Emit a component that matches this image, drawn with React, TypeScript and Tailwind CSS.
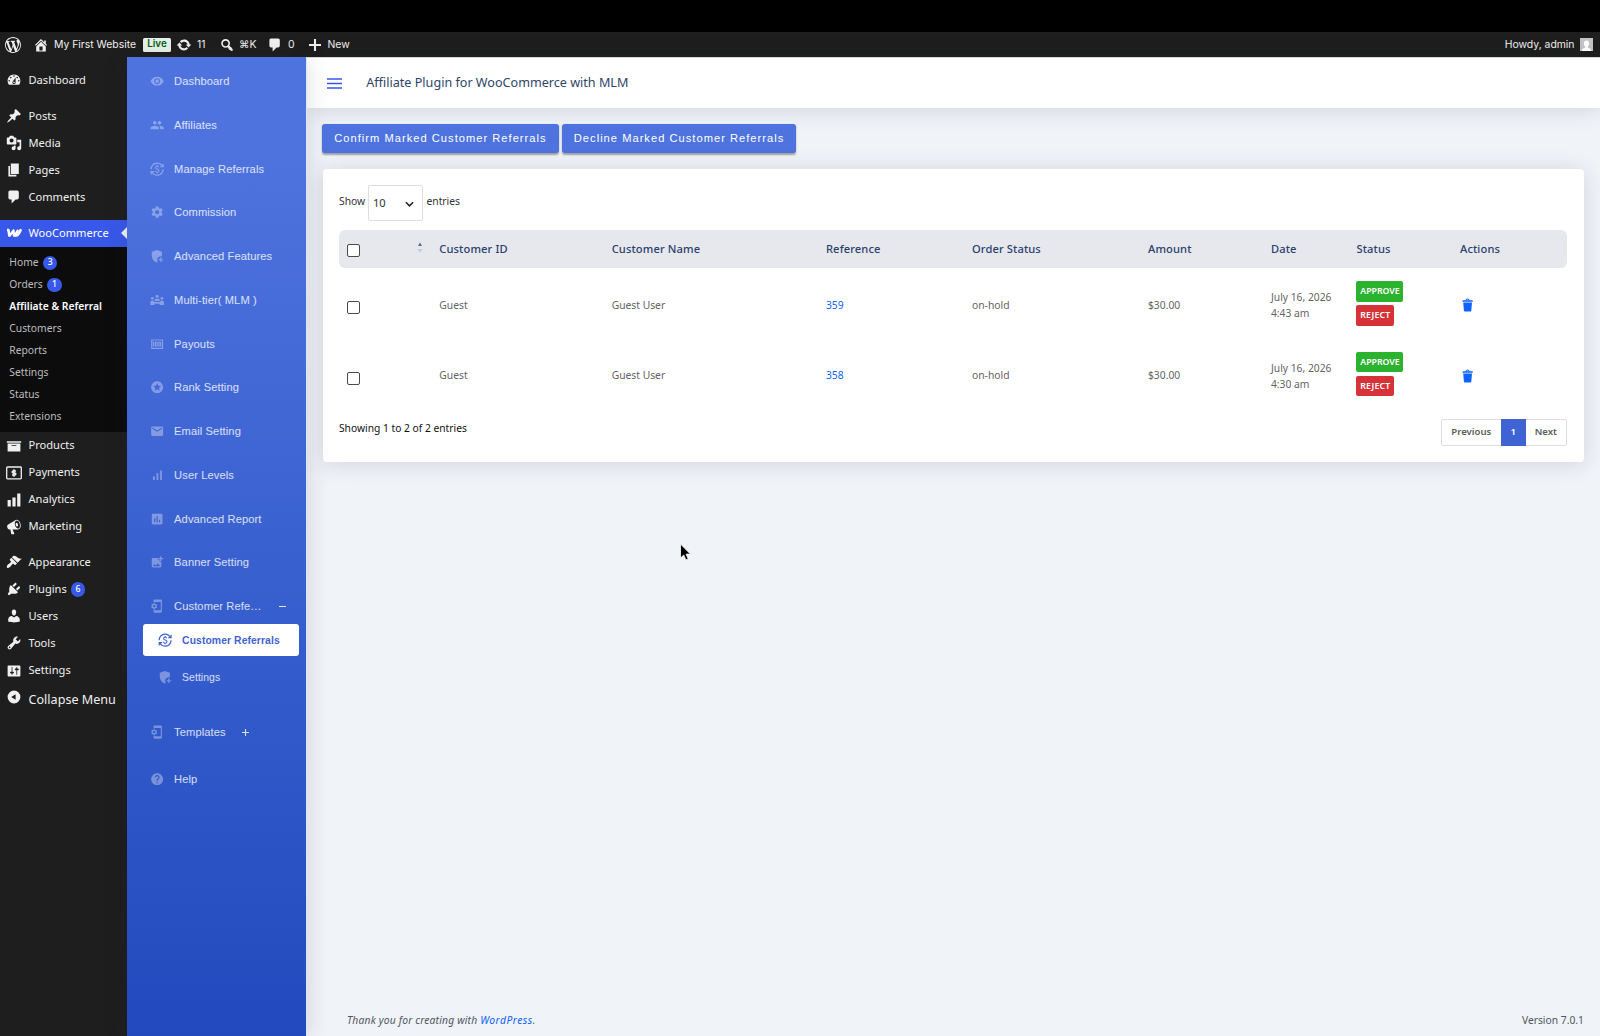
import type { ReactNode } from "react";
import type { IconType } from "react-icons";
import {
  MdAddPhotoAlternate,
  MdAssessment,
  MdCurrencyExchange,
  MdHelp,
  MdMail,
  MdMoney,
  MdPeople,
  MdPhonelinkSetup,
  MdSettings,
  MdSignalCellularAlt,
  MdStars,
  MdVisibility,
} from "react-icons/md";

const dashicons = {
  wordpress:
    "M20 10c0-5.51-4.49-10-10-10C4.48 0 0 4.49 0 10c0 5.52 4.48 10 10 10 5.51 0 10-4.48 10-10zM7.78 15.37L4.37 6.22c.55-.02 1.17-.08 1.17-.08.5-.06.44-1.13-.06-1.11 0 0-1.45.11-2.37.11-.18 0-.37 0-.58-.01C4.12 2.69 6.87 1.11 10 1.11c2.33 0 4.45.87 6.05 2.34-.68-.11-1.65.39-1.65 1.58 0 .74.45 1.36.9 2.1.35.61.55 1.36.55 2.46 0 1.49-1.4 5-1.4 5l-3.03-8.37c.54-.02.82-.17.82-.17.5-.05.44-1.25-.06-1.22 0 0-1.44.12-2.38.12-.87 0-2.33-.12-2.33-.12-.5-.03-.56 1.2-.06 1.22l.92.08 1.26 3.41zM17.41 10c.24-.64.74-1.87.43-4.25.7 1.29 1.05 2.71 1.05 4.25 0 3.29-1.73 6.24-4.4 7.78.97-2.59 1.94-5.2 2.92-7.78zM6.1 18.09C3.12 16.65 1.11 13.53 1.11 10c0-1.3.23-2.48.72-3.59C3.25 10.3 4.67 14.2 6.1 18.09zm4.03-6.63l2.58 6.98c-.86.29-1.76.45-2.71.45-.79 0-1.57-.11-2.29-.33.81-2.38 1.62-4.74 2.42-7.1z",
  home: "M16 8.5l1.53 1.53-1.06 1.06L10 4.6l-6.47 6.49-1.06-1.06L10 2.5l4 4v-2h2v4zm-6-2.46l6 5.99V18H4v-5.97zM12 17v-5H8v5h4z",
  update:
    "M10.2 3.28c3.53 0 6.43 2.61 6.92 6h2.08l-3.5 4-3.5-4h2.32c-.45-1.97-2.21-3.45-4.32-3.45-1.45 0-2.73.71-3.54 1.78L4.95 5.66C6.23 4.2 8.11 3.28 10.2 3.28zm-.4 13.44c-3.52 0-6.43-2.61-6.92-6H.8l3.5-4c1.17 1.33 2.33 2.67 3.5 4H5.48c.45 1.97 2.21 3.45 4.32 3.45 1.45 0 2.73-.71 3.54-1.78l1.71 1.95c-1.28 1.46-3.15 2.38-5.25 2.38z",
  search:
    "M12.14 4.18c1.87 1.87 2.11 4.75.72 6.89.12.1.22.21.36.31.2.16.47.36.81.59.34.24.56.39.66.47.42.31.73.57.94.78.32.32.6.65.84 1 .25.35.44.69.59 1.04.14.35.21.68.18 1-.02.32-.14.59-.36.81s-.49.34-.81.36c-.31.02-.65-.04-.99-.19-.35-.14-.7-.34-1.04-.59-.35-.24-.68-.52-1-.84-.21-.21-.47-.52-.77-.93-.1-.13-.25-.35-.47-.66-.22-.32-.4-.57-.56-.78-.16-.2-.29-.35-.44-.5-2.07 1.09-4.69.76-6.44-.98-2.14-2.15-2.14-5.64 0-7.78 2.15-2.15 5.63-2.15 7.78 0zm-1.41 6.36c1.36-1.37 1.36-3.58 0-4.95-1.37-1.37-3.59-1.37-4.95 0-1.37 1.37-1.37 3.58 0 4.95 1.36 1.37 3.58 1.37 4.95 0z",
  plus: "M8.7 2.5h2.6v6.2h6.2v2.6h-6.2v6.2H8.7v-6.2H2.5V8.7h6.2z",
  dashboard:
    "M3.76 16h12.48c1.1-1.37 1.76-3.11 1.76-5 0-4.42-3.58-8-8-8s-8 3.58-8 8c0 1.89.66 3.63 1.76 5zM10 4c.55 0 1 .45 1 1s-.45 1-1 1-1-.45-1-1 .45-1 1-1zM6 6c.55 0 1 .45 1 1s-.45 1-1 1-1-.45-1-1 .45-1 1-1zm8 0c.55 0 1 .45 1 1s-.45 1-1 1-1-.45-1-1 .45-1 1-1zm-5.37 5.55L12 7v6c0 1.1-.9 2-2 2s-2-.9-2-2c0-.57.24-1.08.63-1.45zM4 10c.55 0 1 .45 1 1s-.45 1-1 1-1-.45-1-1 .45-1 1-1zm12 0c.55 0 1 .45 1 1s-.45 1-1 1-1-.45-1-1 .45-1 1-1zm-5 3c0-.55-.45-1-1-1s-1 .45-1 1 .45 1 1 1 1-.45 1-1z",
  post: "M10.44 3.02l1.82-1.82 6.36 6.35-1.83 1.82c-1.05-.68-2.48-.57-3.41.36l-.75.75c-.92.93-1.04 2.35-.35 3.41l-1.83 1.82-2.41-2.41-2.8 2.79c-.42.42-3.38 2.71-3.8 2.29s1.86-3.39 2.28-3.81l2.79-2.79L4.1 9.36l1.83-1.82c1.05.69 2.48.57 3.4-.36l.75-.75c.93-.92 1.05-2.35.36-3.41z",
  media:
    "M13 11V4c0-.55-.45-1-1-1h-1.67L9 1H5L3.67 3H2c-.55 0-1 .45-1 1v7c0 .55.45 1 1 1h10c.55 0 1-.45 1-1zM7 4.5c1.38 0 2.5 1.12 2.5 2.5S8.38 9.5 7 9.5 4.5 8.38 4.5 7 5.62 4.5 7 4.5zM14 6h5v10.5c0 1.38-1.12 2.5-2.5 2.5S14 17.88 14 16.5s1.12-2.5 2.5-2.5c.17 0 .34.02.5.05V9h-3V6zm-4 8.05V13h2v3.5c0 1.38-1.12 2.5-2.5 2.5S7 17.88 7 16.5 8.12 14 9.5 14c.17 0 .34.02.5.05z",
  page: "M6 15V2h10v13H6zm-1 1h8v2H3V5h2v11z",
  comments:
    "M5 2h9c1.1 0 2 .9 2 2v7c0 1.1-.9 2-2 2h-2l-5 5v-5H5c-1.1 0-2-.9-2-2V4c0-1.1.9-2 2-2z",
  archive: "M19 4v2H1V4h18zM2 7h16v10H2V7zm11 3V9H7v1h6z",
  chart: "M18 18V2h-4v16h4zm-6 0V7H8v11h4zm-6 0v-8H2v8h4z",
  megaphone:
    "M18.15 5.94c.46 1.62.38 3.22-.02 4.48-.42 1.28-1.26 2.18-2.3 2.48-.16.06-.26.06-.4.06-.06.02-.12.02-.18.02-.06.02-.14.02-.22.02h-6.8l2.22 5.5c.02.14-.06.26-.14.34-.08.1-.24.16-.34.16H6.95c-.1 0-.26-.06-.34-.16-.08-.08-.16-.2-.14-.34l-1-5.5H4.25l-.02-.02c-.5.06-1.08-.18-1.54-.62s-.88-1.08-1.06-1.88c-.24-.8-.2-1.56-.02-2.2.18-.62.58-1.08 1.06-1.3l.02-.02 9-5.4c.1-.06.18-.1.24-.16.06-.04.14-.08.24-.12.16-.08.28-.12.5-.18 1.04-.3 2.24.1 3.22.98s1.84 2.24 2.26 3.86zm-2.58 5.98h-.02c.4-.1.74-.34 1.04-.7.58-.7.86-1.76.86-3.04 0-.64-.1-1.3-.28-1.98-.34-1.36-1.02-2.5-1.78-3.24s-1.68-1.1-2.46-.88c-.82.22-1.4.96-1.7 2-.32 1.04-.28 2.36.06 3.72.38 1.36 1 2.5 1.8 3.24.78.74 1.62 1.1 2.48.88zm-2.54-7.08c.22-.04.42-.02.62.04.38.16.76.48 1.02 1s.42 1.2.42 1.78c0 .3-.04.56-.12.8-.18.48-.44.84-.86.94-.34.1-.8-.06-1.14-.4s-.64-.86-.78-1.5c-.18-.62-.12-1.24.02-1.72s.48-.84.82-.94z",
  appearance:
    "M14.48 11.06L7.41 3.99l1.5-1.5c.5-.56 2.3-.47 3.51.32 1.21.8 1.43 1.28 2.91 2.1 1.18.64 2.45 1.26 4.45.85zm-.71.71L6.7 4.7 4.93 6.47c-.39.39-.39 1.02 0 1.41l1.06 1.06c.39.39.39 1.03 0 1.42-.6.6-1.43 1.11-2.21 1.69-.35.26-.7.53-1.01.84C1.43 14.23.4 16.08 1.4 17.07c.99 1 2.84-.03 4.18-1.36.31-.31.58-.66.85-1.02.57-.78 1.08-1.61 1.69-2.21.39-.39 1.02-.39 1.41 0l1.06 1.06c.39.39 1.02.39 1.41 0z",
  plugins:
    "M13.11 4.36L9.87 7.6 8 5.73l3.24-3.24c.35-.34 1.05-.2 1.56.32.52.51.66 1.21.31 1.55zm-8 1.77l.91-1.12 9.01 9.01-1.19.84c-.71.71-2.63 1.16-3.82 1.16H6.14L4.9 17.26c-.59.59-1.54.59-2.12 0-.59-.58-.59-1.53 0-2.12l1.24-1.24v-3.88c0-1.13.4-3.19 1.09-3.89zm7.26 3.97l3.24-3.24c.34-.35 1.04-.21 1.55.31.52.51.66 1.21.31 1.55l-3.24 3.25z",
  users:
    "M10 9.25c-2.27 0-2.73-3.44-2.73-3.44C7 4.02 7.82 2 9.97 2c2.16 0 2.98 2.02 2.71 3.81 0 0-.41 3.44-2.68 3.44zm0 2.57L12.72 10c2.39 0 4.52 2.33 4.52 4.53v2.49s-3.65 1.13-7.24 1.13c-3.65 0-7.24-1.13-7.24-1.13v-2.49c0-2.25 1.94-4.48 4.47-4.48z",
  tools:
    "M16.68 9.77c-1.34 1.34-3.3 1.67-4.95.99l-5.41 6.52c-.99.99-2.59.99-3.58 0s-.99-2.59 0-3.57l6.52-5.42c-.68-1.65-.35-3.61.99-4.95 1.28-1.28 3.12-1.62 4.72-1.06l-2.89 2.89 2.82 2.82 2.86-2.87c.53 1.58.18 3.39-1.08 4.65zM3.81 16.21c.4.39 1.04.39 1.43 0 .4-.4.4-1.04 0-1.43-.39-.4-1.03-.4-1.43 0-.39.39-.39 1.03 0 1.43z",
  settings:
    "M18 16V4c0-.55-.45-1-1-1H3c-.55 0-1 .45-1 1v12c0 .55.45 1 1 1h14c.55 0 1-.45 1-1zM8 11h1c.55 0 1 .45 1 1s-.45 1-1 1H8v1.5c0 .28-.22.5-.5.5s-.5-.22-.5-.5V13H6c-.55 0-1-.45-1-1s.45-1 1-1h1V5.5c0-.28.22-.5.5-.5s.5.22.5.5V11zm5-2h-1c-.55 0-1-.45-1-1s.45-1 1-1h1V5.5c0-.28.22-.5.5-.5s.5.22.5.5V7h1c.55 0 1 .45 1 1s-.45 1-1 1h-1v5.5c0 .28-.22.5-.5.5s-.5-.22-.5-.5V9z",
  collapse: "M10 2a8 8 0 1 0 0 16 8 8 0 0 0 0-16zm2 4.5v7L6.5 10z",
  trash:
    "M12 4h3c.6 0 1 .4 1 1v1H3V5c0-.6.5-1 1-1h3c.2-1.1 1.3-2 2.5-2s2.3.9 2.5 2zM8 4h3c-.2-.6-.9-1-1.5-1S8.2 3.4 8 4zM4 7h11l-.9 10.1c0 .5-.5.9-1 .9H5.9c-.5 0-.9-.4-1-.9L4 7z",
};

type DashiconName = keyof typeof dashicons;

function Dashicon({ name, className = "size-4" }: { name: DashiconName; className?: string }) {
  return (
    <svg viewBox="0 0 20 20" fill="currentColor" fillRule="evenodd" className={`shrink-0 ${className}`}>
      <path d={dashicons[name]} />
    </svg>
  );
}

function WooIcon() {
  return (
    <svg viewBox="0 0 16 16" fill="none" stroke="currentColor" strokeLinejoin="round" className="size-4 shrink-0">
      <path strokeWidth="2.4" d="M1 5h1.500l.7 5.600h.6l3.700-5.200.5 5.200h.7l3.500-5.600" />
      <path strokeWidth="2.600" strokeLinecap="round" d="M9.400 10.400c2.200.4 3.900-1.900 5.100-5.200" />
    </svg>
  );
}

function PaymentsIcon() {
  return (
    <svg viewBox="0 0 16 16" fill="none" stroke="currentColor" className="size-4 shrink-0">
      <rect x="0.7" y="2" width="14.6" height="11.8" rx="0.8" strokeWidth="1.3" />
      <path strokeWidth="1.5" d="M10 6H7.2a1 1 0 0 0 0 2h1.600a1 1 0 0 1 0 2H6M8 4.200v7.600" />
    </svg>
  );
}

function ShieldPlusIcon({ className }: { className?: string }) {
  return (
    <svg viewBox="0 0 24 24" fill="currentColor" className={className}>
      <path d="M11.500 1.500 3 4.700v6.500c0 5.300 3.600 9.700 8.500 11.300.6-.2 1.100-.4 1.600-.6a6.200 6.200 0 0 1 6.700-9.600c.1-.4.2-.7.2-1.100V4.700z" />
      <path d="M17.200 14h2v3h3v2h-3v3h-2v-3h-3v-2h3z" />
    </svg>
  );
}

function NetworkIcon({ className }: { className?: string }) {
  return (
    <svg viewBox="0 0 24 24" fill="currentColor" className={className}>
      <circle cx="12" cy="5.500" r="2.600" />
      <circle cx="4" cy="9" r="2.400" />
      <circle cx="20" cy="9" r="2.400" />
      <path d="M7.500 13c0-2.400 2-3.700 4.500-3.700s4.500 1.300 4.500 3.700v.6h-9z" />
      <path d="M.5 20v-4.500c0-1.700 1.500-2.900 3.500-2.900s2.800 1 3.500 2.600h9c.7-1.600 1.500-2.600 3.500-2.600s3.500 1.200 3.500 2.900V20h-7.200v-2h-8.600v2z" />
    </svg>
  );
}

function CountBadge({ children }: { children: ReactNode }) {
  return (
    <span className="flex size-[14.4px] items-center justify-center rounded-full bg-[#3858e9] text-[8.7px] leading-none font-medium text-white">
      {children}
    </span>
  );
}

interface AdminItem {
  label: string;
  icon: DashiconName | "payments";
  count?: number;
}

const adminTop: AdminItem[] = [
  { label: "Posts", icon: "post" },
  { label: "Media", icon: "media" },
  { label: "Pages", icon: "page" },
  { label: "Comments", icon: "comments" },
];

const wooSubmenu = [
  { label: "Home", count: 3 },
  { label: "Orders", count: 1 },
  { label: "Affiliate & Referral", current: true },
  { label: "Customers" },
  { label: "Reports" },
  { label: "Settings" },
  { label: "Status" },
  { label: "Extensions" },
];

const adminCommerce: AdminItem[] = [
  { label: "Products", icon: "archive" },
  { label: "Payments", icon: "payments" },
  { label: "Analytics", icon: "chart" },
  { label: "Marketing", icon: "megaphone" },
];

const adminSite: AdminItem[] = [
  { label: "Appearance", icon: "appearance" },
  { label: "Plugins", icon: "plugins", count: 6 },
  { label: "Users", icon: "users" },
  { label: "Tools", icon: "tools" },
  { label: "Settings", icon: "settings" },
];

type MenuIcon = IconType | typeof ShieldPlusIcon;

const pluginMenu: { label: string; icon: MenuIcon }[] = [
  { label: "Dashboard", icon: MdVisibility },
  { label: "Affiliates", icon: MdPeople },
  { label: "Manage Referrals", icon: MdCurrencyExchange },
  { label: "Commission", icon: MdSettings },
  { label: "Advanced Features", icon: ShieldPlusIcon },
  { label: "Multi-tier( MLM )", icon: NetworkIcon },
  { label: "Payouts", icon: MdMoney },
  { label: "Rank Setting", icon: MdStars },
  { label: "Email Setting", icon: MdMail },
  { label: "User Levels", icon: MdSignalCellularAlt },
  { label: "Advanced Report", icon: MdAssessment },
  { label: "Banner Setting", icon: MdAddPhotoAlternate },
];

const referrals = [
  { reference: "359", time: "4:43 am" },
  { reference: "358", time: "4:30 am" },
];

function AdminBar() {
  return (
    <header className="flex h-[25px] shrink-0 items-center bg-[#1e1e1e] pt-[0.5px] font-['Inter',sans-serif] text-[10.4px] text-[#f0f0f0]">
      <div className="w-[33px] pl-[5px]">
        <Dashicon name="wordpress" />
      </div>
      <div className="flex w-[110px] items-center gap-[5px] whitespace-nowrap">
        <Dashicon name="home" />
        <span className="pt-px">My First Website</span>
      </div>
      <span className="flex h-[14px] w-[28px] items-center justify-center rounded-[1.5px] bg-[#e6f2e8] text-[9.8px] font-semibold text-[#005c12]">
        Live
      </span>
      <div className="ml-[5px] flex w-[43px] items-center gap-[5px]">
        <Dashicon name="update" />
        <span className="pt-px">11</span>
      </div>
      <div className="flex w-[48px] items-center gap-[4px]">
        <Dashicon name="search" />
        <span className="pt-px">⌘K</span>
      </div>
      <div className="flex w-[40px] items-center gap-[5px]">
        <Dashicon name="comments" />
        <span className="pt-px">0</span>
      </div>
      <div className="flex items-center gap-[4.5px]">
        <Dashicon name="plus" />
        <span className="pt-px">New</span>
      </div>
      <div className="ml-auto flex items-center gap-[5.5px] pr-[7px]">
        <span className="pt-px">Howdy, admin</span>
        <svg viewBox="0 0 13 13" className="size-[13px]">
          <path fill="#c3c3c3" d="M0 0h13v13H0z" />
          <path
            fill="#fff"
            d="M6.5 2.6c1.7 0 2.7 1.3 2.7 3 0 1.2-.5 2.2-1.3 2.8v1l3 1.5V13H2.1v-2.1l3-1.5v-1C4.3 7.8 3.8 6.8 3.8 5.6c0-1.7 1-3 2.7-3z"
          />
        </svg>
      </div>
    </header>
  );
}

function AdminRow({ item }: { item: AdminItem }) {
  return (
    <li className="flex h-[27.05px] items-center gap-[6.5px] pl-[6px]">
      {item.icon === "payments" ? <PaymentsIcon /> : <Dashicon name={item.icon} />}
      <span className="flex items-center gap-[4px]">
        {item.label}
        {item.count && <CountBadge>{item.count}</CountBadge>}
      </span>
    </li>
  );
}

function AdminMenu() {
  return (
    <nav className="w-[127.3px] shrink-0 bg-[#1e1e1e] pt-[9.5px] text-[11.1px] text-[#f0f0f0]">
      <ul>
        <AdminRow item={{ label: "Dashboard", icon: "dashboard" }} />
      </ul>
      <ul className="mt-[9px]">
        {adminTop.map((item) => (
          <AdminRow key={item.label} item={item} />
        ))}
      </ul>
      <div className="relative mt-[9px] flex h-[27px] items-center gap-[6.5px] bg-[#3858e9] pl-[6px] text-white">
        <WooIcon />
        WooCommerce
        <span className="absolute top-1/2 right-0 -translate-y-1/2 border-y-[6px] border-r-[6px] border-y-transparent border-r-[#f0f3f8]" />
      </div>
      <ul className="bg-[#0c0c0c] pt-[5px] pb-[4px] text-[10.3px] text-[#bcbcbc]">
        {wooSubmenu.map((item) => (
          <li
            key={item.label}
            className={`flex h-[22.05px] items-center gap-[4.5px] pl-[9.3px] ${item.current ? "font-semibold text-white" : ""}`}
          >
            {item.label}
            {item.count && <CountBadge>{item.count}</CountBadge>}
          </li>
        ))}
      </ul>
      <ul>
        {adminCommerce.map((item) => (
          <AdminRow key={item.label} item={item} />
        ))}
      </ul>
      <ul className="mt-[8.5px]">
        {adminSite.map((item) => (
          <AdminRow key={item.label} item={item} />
        ))}
      </ul>
      <div className="flex h-8 items-start gap-[6.5px] pt-[5px] pl-[6px] text-[12.6px]">
        <Dashicon name="collapse" />
        <span className="pt-[2px]">Collapse Menu</span>
      </div>
    </nav>
  );
}

function PluginItem({ label, icon: Icon, toggle }: { label: string; icon: MenuIcon; toggle?: ReactNode }) {
  return (
    <li className="flex h-[43.75px] items-center pl-[22.5px]">
      <Icon className="size-[14.3px] shrink-0 text-white/35" />
      <span className="ml-[10px]">{label}</span>
      {toggle}
    </li>
  );
}

function PluginSidebar() {
  return (
    <nav className="z-10 w-[179.7px] shrink-0 border-r border-[#dfe5f5] bg-linear-to-b from-[#4e73df] from-10% to-[#224abe] pt-[2.5px] font-['Liberation_Sans',Arial,sans-serif] text-[11.13px] tracking-[0.1px] text-white/80 shadow-[0_2px_22px_rgba(33,40,50,0.15)]">
      <ul>
        {pluginMenu.map((item) => (
          <PluginItem key={item.label} {...item} />
        ))}
        <PluginItem
          label="Customer Refe…"
          icon={MdPhonelinkSetup}
          toggle={<span className="ml-[18px] h-px w-[7px] bg-white/85" />}
        />
      </ul>
      <div className="-mt-[4px] ml-[16px] flex h-[32px] w-[155.5px] items-center rounded-[3px] bg-white pl-[14.5px] text-[10.33px] font-bold text-[#3f63d2]">
        <MdCurrencyExchange className="size-[14.3px]" />
        <span className="ml-[10px]">Customer Referrals</span>
      </div>
      <div className="mt-[5px] flex h-[32px] items-center pl-[30.5px] text-[10.33px]">
        <ShieldPlusIcon className="size-[14.3px] text-white/35" />
        <span className="ml-[10px]">Settings</span>
      </div>
      <ul className="mt-[17px]">
        <PluginItem
          label="Templates"
          icon={MdPhonelinkSetup}
          toggle={
            <svg viewBox="0 0 8 8" className="ml-[16px] size-[7px]" stroke="currentColor" strokeWidth="1.3">
              <path d="M4 0v8M0 4h8" />
            </svg>
          }
        />
        <li className="h-[3.5px]" />
        <PluginItem label="Help" icon={MdHelp} />
      </ul>
    </nav>
  );
}

function ActionButton({ children }: { children: ReactNode }) {
  return (
    <button className="h-[28.5px] rounded-[3px] bg-[#4e73df] px-[12px] font-['Liberation_Sans',Arial,sans-serif] text-[11.13px] leading-none tracking-[1.02px] whitespace-nowrap text-white shadow-[0_1.5px_2px_rgba(0,0,0,0.35)]">
      {children}
    </button>
  );
}

function Checkbox() {
  return <span className="block size-[13px] rounded-[2px] border-[1.5px] border-[#4a4a4a] bg-white" />;
}

const columns = "grid grid-cols-[100.3px_172.4px_214.3px_146px_176px_123px_85.5px_103.5px_1fr] items-center";

function ReferralsTable() {
  return (
    <div className="mt-[9.5px]">
      <div
        className={`${columns} h-[37.5px] rounded-[6px] bg-[#e6e8ee] pt-px text-[11.13px] font-medium tracking-[0.12px] text-[#2b416b]`}
      >
        <div className="flex items-center justify-between pt-[2px] pr-[16px] pl-[8px]">
          <Checkbox />
          <svg viewBox="0 0 6 11" className="-mt-1.5 h-[11px] w-[6px]">
            <path fill="#5b6b8c" d="M3 0.5 5 4H1z" />
            <path fill="#c6cbd8" d="M3 10.5 0.2 7h5.6z" />
          </svg>
        </div>
        <span>Customer ID</span>
        <span>Customer Name</span>
        <span>Reference</span>
        <span>Order Status</span>
        <span>Amount</span>
        <span>Date</span>
        <span>Status</span>
        <span>Actions</span>
      </div>
      {referrals.map((row) => (
        <div key={row.reference} className={`${columns} h-[70.8px] pt-[5px] text-[10.3px] text-[#646464]`}>
          <div className="pt-[4px] pl-[8px]">
            <Checkbox />
          </div>
          <span>Guest</span>
          <span>Guest User</span>
          <a className="text-[#0f62fe]">{row.reference}</a>
          <span>on-hold</span>
          <span>$30.00</span>
          <span className="-mt-px leading-[16px]">
            July 16, 2026
            <br />
            {row.time}
          </span>
          <div className="-mt-1 flex flex-col items-start gap-[3.5px] text-[8.74px] leading-none font-semibold text-white">
            <button className="h-[20.5px] rounded-[2px] bg-[#2bb32f] px-[3.8px]">APPROVE</button>
            <button className="h-[20.5px] rounded-[2px] bg-[#d63238] px-[3.8px] tracking-[0.15px]">REJECT</button>
          </div>
          <Dashicon name="trash" className="-mt-px size-4 text-[#0f62fe]" />
        </div>
      ))}
    </div>
  );
}

function Content() {
  return (
    <main className="flex min-w-0 flex-1 flex-col bg-[#f0f3f8]">
      <div className="flex h-[51px] shrink-0 items-center border-t border-[#d5d8dc] bg-white pl-[20.3px] shadow-[0_2px_22px_rgba(33,40,50,0.15)]">
        <svg viewBox="0 0 15 11" className="h-[11px] w-[15px]" stroke="#3858e9" strokeWidth="1.6">
          <path d="M0 1h15M0 5.5h15M0 10h15" />
        </svg>
        <h1 className="ml-[24px] text-[12.6px] text-[#2f4468]">Affiliate Plugin for WooCommerce with MLM</h1>
      </div>
      <div className="mt-[16px] flex gap-[3.2px] pl-[15.3px]">
        <ActionButton>Confirm Marked Customer Referrals</ActionButton>
        <ActionButton>Decline Marked Customer Referrals</ActionButton>
      </div>
      <section className="mt-[16.5px] mr-[16.5px] ml-[16px] h-[292.5px] rounded-[4px] bg-white pt-[16px] pr-[16.7px] pl-[16px] shadow-[0_2px_22px_rgba(33,40,50,0.15)]">
        <div className="flex h-[35.5px] items-center text-[10.3px] text-[#333]">
          <span className="-mt-[1.5px] w-[29px]">Show</span>
          <div className="flex h-full w-[55.5px] items-center justify-between rounded-[2px] border border-[#dedede] pt-[1.5px] pr-[8px] pl-[4px] text-[11.13px]">
            10
            <svg viewBox="0 0 10 6" className="h-[6px] w-[9px]" fill="none" stroke="#222" strokeWidth="1.7">
              <path d="M1 1l4 4 4-4" />
            </svg>
          </div>
          <span className="-mt-[1.5px] ml-[3px]">entries</span>
        </div>
        <ReferralsTable />
        <div className="mt-[10px] flex h-[26.5px] justify-between">
          <span className="pt-[2px] text-[10.25px] text-[#111]">Showing 1 to 2 of 2 entries</span>
          <div className="flex rounded-[2px] border border-[#dedede] text-[9.6px] font-semibold text-[#5c5c5c]">
            <span className="flex w-[59px] items-center justify-center">Previous</span>
            <span className="-my-px flex w-[25px] items-center justify-center bg-[#3f63d2] text-white">1</span>
            <span className="flex w-[40px] items-center justify-center">Next</span>
          </div>
        </div>
      </section>
      <footer className="mt-auto flex justify-between pr-[16px] pb-[8px] pl-[40px] text-[10.3px] text-[#50575e]">
        <span className="tracking-[0.18px] italic">
          Thank you for creating with <a className="tracking-[0.5px] text-[#0f62fe]">WordPress</a>.
        </span>
        <span>Version 7.0.1</span>
      </footer>
    </main>
  );
}

function Cursor() {
  return (
    <svg viewBox="0 0 12 18" className="absolute top-[543px] left-[679px] h-[20px] w-[13.5px]">
      <path
        d="M1.3 1v12.500l2.900-2.700 1.900 4.400 2.100-.9-1.900-4.300h3.900z"
        fill="#000"
        stroke="#fff"
        strokeWidth="0.7"
      />
    </svg>
  );
}

export default function App() {
  return (
    <div className="relative flex h-[1036px] w-[1600px] flex-col overflow-hidden font-['Noto_Sans',sans-serif]">
      <div className="h-8 shrink-0 bg-black" />
      <AdminBar />
      <div className="flex min-h-0 flex-1">
        <AdminMenu />
        <PluginSidebar />
        <Content />
      </div>
      <Cursor />
    </div>
  );
}
